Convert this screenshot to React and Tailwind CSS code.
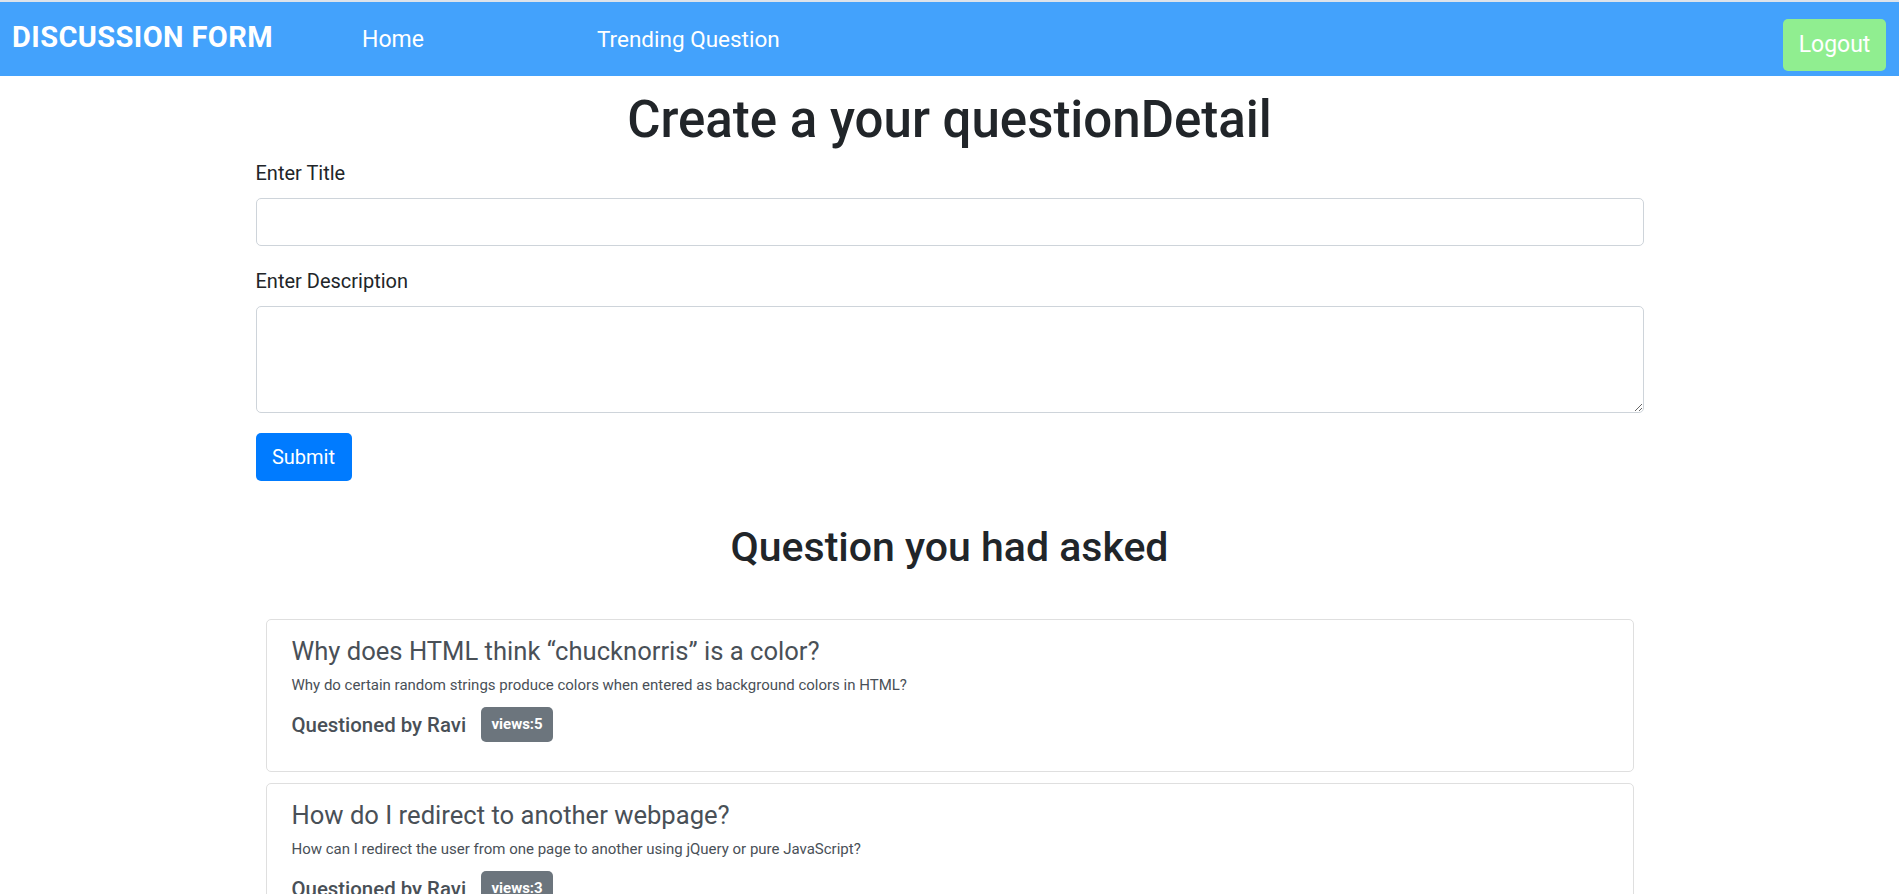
import React, { useState } from "react";

const questions = [
  {
    id: 1,
    title: "Why does HTML think \u201cchucknorris\u201d is a color?",
    desc: "Why do certain random strings produce colors when entered as background colors in HTML?",
    user: "Ravi",
    views: 5,
  },
  {
    id: 2,
    title: "How do I redirect to another webpage?",
    desc: "How can I redirect the user from one page to another using jQuery or pure JavaScript?",
    user: "Ravi",
    views: 3,
  },
];

function Navbar() {
  return (
    <nav className="flex items-center h-[76px] border-t-2 border-[#dde3ea] bg-[#43a2fc] text-white">
      <div className="w-[362px] pl-[12px] mb-[4px] text-[29px] font-bold leading-none tracking-[0.4px]">
        DISCUSSION FORM
      </div>
      <a href="#" className="w-[235px] text-[23px] leading-none">
        Home
      </a>
      <a href="#" className="text-[22.5px] leading-none">
        Trending Question
      </a>
      <button className="ml-auto mr-[13px] mt-[12px] w-[103px] h-[52px] rounded-[5px] bg-[#90ee90] text-white text-[23px]">
        Logout
      </button>
    </nav>
  );
}

function QuestionCard({ q }) {
  return (
    <div className="mb-[11px] rounded-[5px] border border-[#dfdfdf] bg-white pt-[16px] pb-[29px] px-[25px] text-[#495057]">
      <h5 className="text-[25.6px] leading-[30px]">{q.title}</h5>
      <p className="mt-[8px] text-[15px] leading-[22px]">{q.desc}</p>
      <div className="mt-[11px] flex items-center">
        <h6 className="text-[20.4px] font-medium leading-[24px]">Questioned by {q.user}</h6>
        <span className="ml-[15px] flex items-center justify-center w-[72px] h-[35px] rounded-[5px] bg-[#6c757d] text-white text-[15px] font-bold">
          views:{q.views}
        </span>
      </div>
    </div>
  );
}

export default function App() {
  const [title, setTitle] = useState("");
  const [desc, setDesc] = useState("");

  return (
    <div className="min-h-screen bg-white font-[Roboto,'Noto_Sans',sans-serif] text-[#212529]">
      <Navbar />
      <div className="w-[1388px] mx-auto">
        <h1 className="mt-[14px] text-center text-[51px] font-medium leading-[60px]">
          Create a your questionDetail
        </h1>
        <form onSubmit={(e) => e.preventDefault()} className="mt-[8px]">
          <div className="mb-[20px]">
            <label className="block mb-[10px] text-[20px] leading-[30px]">Enter Title</label>
            <input
              type="text"
              value={title}
              onChange={(e) => setTitle(e.target.value)}
              className="block w-full h-[48px] px-[15px] rounded-[5px] border border-[#ced4da] text-[20px] outline-none"
            />
          </div>
          <div className="mb-[20px]">
            <label className="block mb-[10px] text-[20px] leading-[30px]">Enter Description</label>
            <textarea
              rows={3}
              value={desc}
              onChange={(e) => setDesc(e.target.value)}
              className="block w-full h-[107px] px-[15px] py-[7px] rounded-[5px] border border-[#ced4da] text-[20px] outline-none"
            />
          </div>
          <button className="w-[96px] h-[48px] rounded-[5px] bg-[#007bff] text-white text-[20px]">
            Submit
          </button>
        </form>

        <h2 className="mt-[42px] text-center text-[41px] font-medium leading-[48px]">
          Question you had asked
        </h2>
        <div className="mt-[48px] px-[10px]">
          {questions.map((q) => (
            <QuestionCard key={q.id} q={q} />
          ))}
        </div>
      </div>
    </div>
  );
}
